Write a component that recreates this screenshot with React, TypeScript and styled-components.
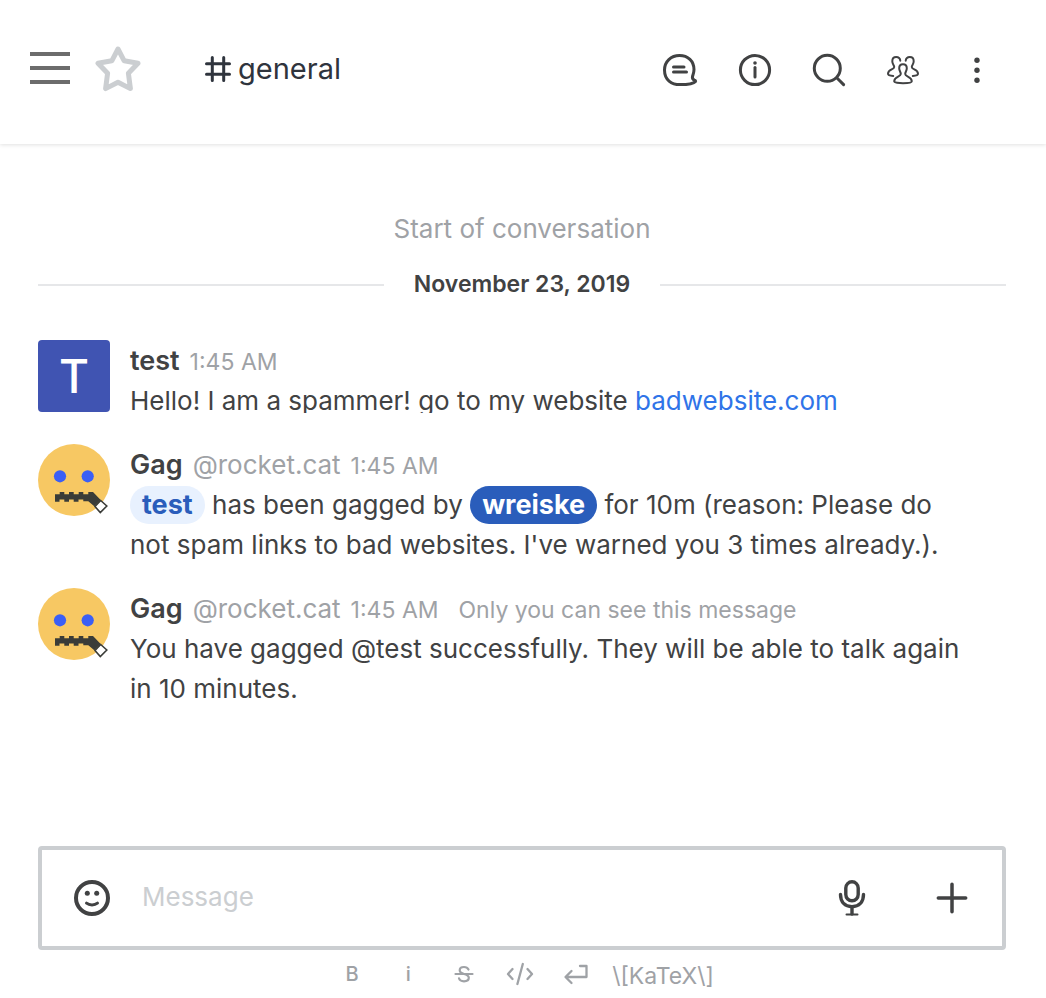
import React from "react";
import styled, { createGlobalStyle } from "styled-components";

const ink = "#414243";
const muted = "#9fa2a6";

const GlobalStyle = createGlobalStyle`
  * { box-sizing: border-box; }
  body {
    margin: 0;
    background: #ffffff;
    color: ${ink};
    font-family: Inter, "Liberation Sans", sans-serif;
    font-size: 26px;
    line-height: 40px;
  }
`;

const Page = styled.div`
  display: flex;
  flex-direction: column;
  min-height: 100vh;
`;

const Header = styled.header`
  display: flex;
  align-items: center;
  height: 144px;
  padding: 0 32px 4px 30px;
  box-shadow: 0 1px 4px rgba(0, 0, 0, 0.12);
`;

const IconButton = styled.button<{ $width: number }>`
  display: flex;
  align-items: center;
  justify-content: center;
  flex: none;
  width: ${(p) => p.$width}px;
  height: 48px;
  padding: 0;
  border: 0;
  background: none;
  color: ${(p) => p.color ?? ink};
  font: inherit;
  cursor: pointer;
`;

const Title = styled.h1`
  display: flex;
  flex: 1;
  align-items: center;
  gap: 6px;
  margin: 0;
  padding: 0 0 2px 38px;
  color: #2f343d;
  font-size: 29px;
  font-weight: 400;
`;

const Actions = styled.nav`
  display: flex;
`;

const Conversation = styled.main`
  flex: 1;
  padding: 65px 40px 64px 38px;
`;

const Start = styled.p`
  margin: 0;
  color: ${muted};
  text-align: center;
`;

const DateDivider = styled.div`
  display: flex;
  align-items: center;
  gap: 30px;
  margin: 16px 0 36px;
  font-size: 23px;
  font-weight: 600;
  line-height: 39px;

  &::before,
  &::after {
    content: "";
    flex: 1;
    height: 2px;
    background: #e6e7e9;
  }
`;

const MessageList = styled.ol`
  display: flex;
  flex-direction: column;
  gap: 23px;
  margin: 0;
  padding: 0;
  list-style: none;
`;

const Message = styled.li`
  display: flex;
  gap: 20px;
`;

const Avatar = styled.div`
  display: flex;
  align-items: center;
  justify-content: center;
  flex: none;
  width: 72px;
  height: 72px;
  border-radius: 4px;
  background: #4054b2;
  color: #ffffff;
  font-size: 46px;
  font-weight: 500;
`;

const Content = styled.div`
  flex: 1;
  min-width: 0;
  padding-top: 1px;
`;

const Meta = styled.div`
  display: flex;
  align-items: baseline;
  gap: 10px;
  height: 40px;
  color: ${muted};
`;

const Author = styled.strong`
  color: ${ink};
  font-size: 27px;
  font-weight: 600;
`;

const Time = styled.time`
  font-size: 23px;
`;

const Notice = styled.span`
  padding-left: 10px;
  font-size: 23px;
`;

const Body = styled.p<{ $clipped?: boolean }>`
  margin: 0 0 ${(p) => (p.$clipped ? 8 : 0)}px;
  max-height: ${(p) => (p.$clipped ? "32px" : "none")};
  padding-right: 40px;
  overflow: ${(p) => (p.$clipped ? "hidden" : "visible")};
`;

const Link = styled.a`
  color: #2f74e8;
  text-decoration: none;
`;

const Mention = styled.a<{ $self?: boolean }>`
  display: inline-block;
  height: 38px;
  margin-top: 1px;
  padding: 0 12px;
  border-radius: 19px;
  background: ${(p) => (p.$self ? "#2a5dbb" : "#e8f1fe")};
  color: ${(p) => (p.$self ? "#ffffff" : "#2a5dbb")};
  font-size: 27px;
  font-weight: 700;
  line-height: 38px;
  text-decoration: none;
  vertical-align: top;
`;

const Footer = styled.footer`
  padding: 0 40px 0 38px;
`;

const Composer = styled.form`
  display: flex;
  align-items: center;
  height: 104px;
  border: 4px solid #cbced1;
  border-radius: 4px;
`;

const MessageInput = styled.input`
  flex: 1;
  min-width: 0;
  height: 48px;
  padding: 0 0 4px;
  border: 0;
  outline: 0;
  background: none;
  color: ${ink};
  font: inherit;

  &::placeholder {
    color: #cbced1;
    opacity: 1;
  }
`;

const Formatting = styled.div`
  display: flex;
  align-items: center;
  justify-content: center;
  height: 48px;
  padding-right: 6px;
`;

const FormatButton = styled(IconButton)`
  color: ${muted};
  font-size: 20px;
  font-weight: 500;
`;

const Katex = styled.a`
  padding: 4px 0 0 8px;
  color: ${muted};
  font-size: 23px;
  text-decoration: none;
`;

type IconProps = {
  size?: number;
  stroke?: number;
  children: React.ReactNode;
};

const Icon = ({ size = 36, stroke = 3, children }: IconProps) => (
  <svg
    width={size}
    height={size}
    viewBox={`0 0 ${size} ${size}`}
    fill="none"
    stroke="currentColor"
    strokeWidth={stroke}
    strokeLinecap="round"
    strokeLinejoin="round"
    aria-hidden="true"
  >
    {children}
  </svg>
);

const backPerson =
  "M15.3 8.7C15 6.3 13.3 5 11.2 5C8.8 5 7.3 6.8 7.3 9.3C7.3 12.5 9.2 13.3 9.2 15C9.2 17.8 3 17.2 3 21.8C3 23.3 6 23.8 8.2 23.9";

const GagFace = () => (
  <svg width="72" height="72" viewBox="0 0 72 72" role="img" aria-label="Gag">
    <circle cx="36" cy="36" r="36" fill="#f7c863" />
    <circle cx="22" cy="32.3" r="6.1" fill="#3b5ff5" />
    <circle cx="49.7" cy="32.3" r="6.1" fill="#3b5ff5" />
    <path
      fill="#3a3c38"
      d="M17 50.3H21.7V48H26.3V50.3H31V48H35.7V50.3H40.7V48H45.3V50.3H50.3V48H55L62.7 56L56.3 62.3L50.3 57.3H45.3V55.5H40.5V57.7H35.7V55.5H31V57.7H26.3V55.5H21.5V57.7H17Z"
    />
    <path
      fill="#ffffff"
      stroke="#3a3c38"
      strokeWidth="1.6"
      d="M62.7 56.5L68.8 62L62.3 68.6L57 62.5Z"
    />
  </svg>
);

const GagMessage = ({ notice, children }: { notice?: string; children: React.ReactNode }) => (
  <Message>
    <GagFace />
    <Content>
      <Meta>
        <Author>Gag</Author>
        <span>@rocket.cat</span>
        <Time>1:45 AM</Time>
        {notice && <Notice>{notice}</Notice>}
      </Meta>
      <Body>{children}</Body>
    </Content>
  </Message>
);

export default function App() {
  return (
    <Page>
      <GlobalStyle />
      <Header>
        <IconButton $width={40} color="#6c6c6c" aria-label="Toggle menu">
          <svg width="40" height="36" viewBox="0 0 40 36" fill="currentColor" aria-hidden="true">
            <path d="M0 0H40V4H0ZM0 14H40V18H0ZM0 28H40V32H0Z" />
          </svg>
        </IconButton>
        <IconButton $width={96} color="#cbced1" aria-label="Favorite">
          <Icon size={48} stroke={5}>
            <path d="M24 3L30.2 14.8L44 17.2L34.4 27.2L36.4 42.6L24 36.2L11.6 42.6L13.6 27.2L4 17.2L17.8 14.8Z" />
          </Icon>
        </IconButton>
        <Title>
          <Icon size={28}>
            <path d="M8.3 2.5V25.5M19.7 2.5V25.5M2.5 8.7H25.5M2.5 19.3H25.5" />
          </Icon>
          general
        </Title>
        <Actions>
          <IconButton $width={74} aria-label="Discussion">
            <Icon>
              <path d="M29.5 24.5C30.2 22 31 20.5 31 17.5C31 9 25 3.5 16.5 3.5C8 3.5 1.5 9.5 1.5 18C1.5 28 8.5 32.6 17 32.6C25 32.6 30.5 32 32.5 29.5C33 28.8 32 28.6 31.4 28.3C30 27.4 29 26.5 29.5 24.5Z" />
              <path d="M10.5 15H21M10.5 20H23.5" />
            </Icon>
          </IconButton>
          <IconButton $width={74} aria-label="Info">
            <Icon>
              <circle cx="18" cy="18" r="14.6" />
              <path d="M18 15.5V25" />
              <circle cx="18" cy="11" r="1.8" fill="currentColor" stroke="none" />
            </Icon>
          </IconButton>
          <IconButton $width={74} aria-label="Search">
            <Icon>
              <circle cx="16.3" cy="16.3" r="13" />
              <path d="M26 26L32.6 32.6" />
            </Icon>
          </IconButton>
          <IconButton $width={74} aria-label="Members">
            <Icon stroke={2}>
              <path d={backPerson} />
              <path d={backPerson} transform="translate(36 0) scale(-1 1)" />
              <path d="M14.2 16.2C14.2 13.8 15.8 12.2 18 12.2C20.2 12.2 21.8 13.8 21.8 16.2C21.8 19 20.2 19.8 20.2 22C20.2 25 26.8 24.3 26.8 29.3C26.8 30.7 22 31.2 18 31.2C14 31.2 9.2 30.7 9.2 29.3C9.2 24.3 15.8 25 15.8 22C15.8 19.8 14.2 19 14.2 16.2Z" />
            </Icon>
          </IconButton>
          <IconButton $width={74} aria-label="More">
            <Icon>
              <g fill="currentColor" stroke="none">
                <circle cx="18" cy="8.3" r="2.7" />
                <circle cx="18" cy="18.3" r="2.7" />
                <circle cx="18" cy="28.3" r="2.7" />
              </g>
            </Icon>
          </IconButton>
        </Actions>
      </Header>

      <Conversation>
        <Start>Start of conversation</Start>
        <DateDivider>November 23, 2019</DateDivider>
        <MessageList>
          <Message>
            <Avatar>T</Avatar>
            <Content>
              <Meta>
                <Author>test</Author>
                <Time>1:45 AM</Time>
              </Meta>
              <Body $clipped>
                Hello! I am a spammer! go to my website <Link href="#website">badwebsite.com</Link>
              </Body>
            </Content>
          </Message>
          <GagMessage>
            <Mention href="#test">test</Mention> has been gagged by{" "}
            <Mention href="#wreiske" $self>wreiske</Mention> for 10m (reason: Please do not spam
            links to bad websites. I've warned you 3 times already.).
          </GagMessage>
          <GagMessage notice="Only you can see this message">
            You have gagged @test successfully. They will be able to talk again in 10 minutes.
          </GagMessage>
        </MessageList>
      </Conversation>

      <Footer>
        <Composer onSubmit={(e) => e.preventDefault()}>
          <IconButton $width={100} type="button" aria-label="Emoji">
            <Icon size={40} stroke={4}>
              <circle cx="20" cy="20" r="16" />
              <path d="M14.5 25.2C17.5 27.6 22.5 27.6 25.5 25.2" strokeWidth="3" />
              <g fill="currentColor" stroke="none">
                <circle cx="15.3" cy="15.3" r="2.5" />
                <circle cx="24.7" cy="15.3" r="2.5" />
              </g>
            </Icon>
          </IconButton>
          <MessageInput type="text" placeholder="Message" aria-label="Message" />
          <IconButton $width={100} type="button" aria-label="Record audio">
            <Icon size={40} stroke={3.4}>
              <rect x="13.8" y="3.8" width="12.4" height="19" rx="6.2" />
              <path d="M8.5 16.5C8.5 24 13 28.7 20 28.7C27 28.7 31.5 24 31.5 16.5M20 29V36" />
              <path d="M14.5 36.4H25.5" strokeWidth="2" />
            </Icon>
          </IconButton>
          <IconButton $width={100} type="button" aria-label="Add attachment">
            <Icon size={40} stroke={3.5}>
              <path d="M20 6.3V33.7M6.3 20H33.7" />
            </Icon>
          </IconButton>
        </Composer>
        <Formatting>
          <FormatButton $width={56} aria-label="Bold">B</FormatButton>
          <FormatButton $width={56} aria-label="Italic">i</FormatButton>
          <FormatButton $width={56} aria-label="Strike">
            <Icon size={28} stroke={2.2}>
              <path d="M18.5 9.5C17.5 7.5 16 7 14 7C11.4 7 9.7 8.3 9.7 10.3C9.7 12.2 11 13.2 14 14C17.3 14.8 18.8 15.8 18.8 17.8C18.8 20 16.8 21.3 14 21.3C11.4 21.3 9.6 20.4 9 18.3M5.5 14H22.5" />
            </Icon>
          </FormatButton>
          <FormatButton $width={56} aria-label="Code">
            <Icon size={28} stroke={2.3}>
              <path d="M6.5 9L2 14L6.5 19M21.5 9L26 14L21.5 19M16.8 4L11.4 24" />
            </Icon>
          </FormatButton>
          <FormatButton $width={56} aria-label="Multi line">
            <Icon size={28} stroke={2.3}>
              <path d="M18 6H24.5V17H4M9.5 11L3.5 17L9.5 23" />
            </Icon>
          </FormatButton>
          <Katex href="#katex">\[KaTeX\]</Katex>
        </Formatting>
      </Footer>
    </Page>
  );
}
